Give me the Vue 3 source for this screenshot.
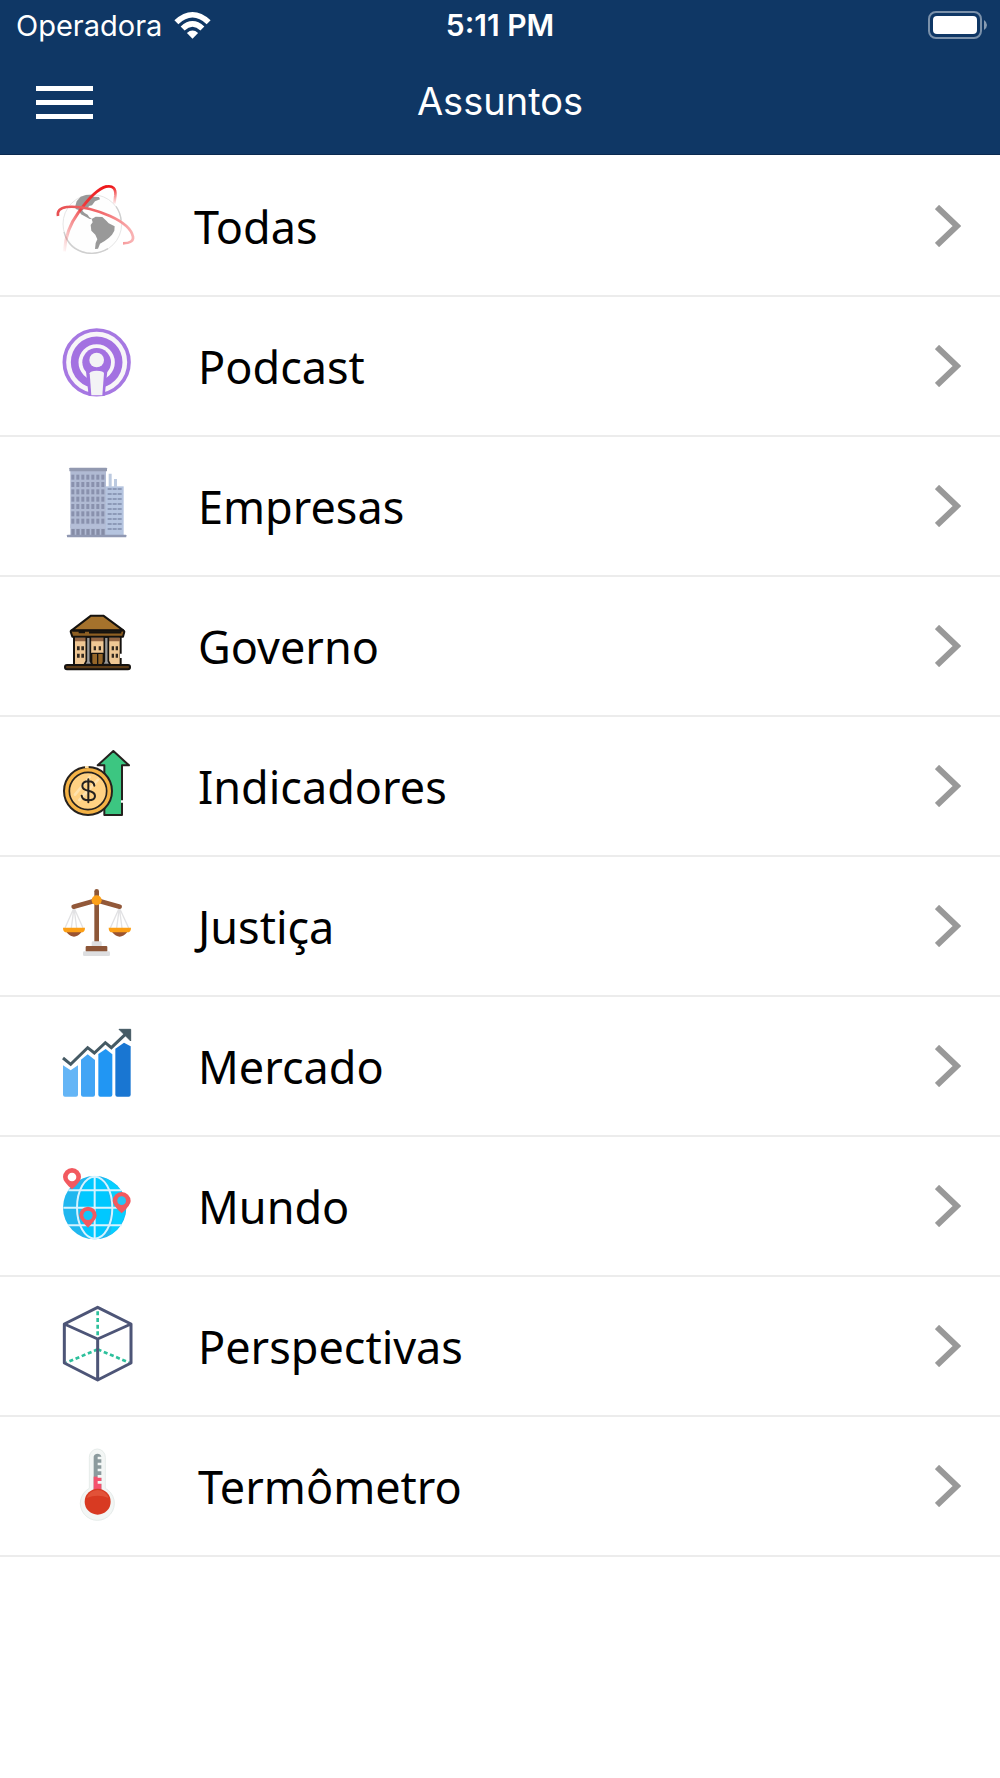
<script setup>
import { ref } from "vue";

const menuOpen = ref(false);

// box = viewBox of the icon, all icons share the same scale
const assuntos = [
    { id: "todas", nome: "Todas", box: "30 14 288 270" },
    { id: "podcast", nome: "Podcast", box: "0 0 300 270" },
    { id: "empresas", nome: "Empresas", box: "0 0 300 270" },
    { id: "governo", nome: "Governo", box: "0 -15 300 270" },
    { id: "indicadores", nome: "Indicadores", box: "0 -15 300 270" },
    { id: "justica", nome: "Justiça", box: "0 -15 300 270" },
    { id: "mercado", nome: "Mercado", box: "0 -15 300 270" },
    { id: "mundo", nome: "Mundo", box: "0 -15 300 270" },
    { id: "perspectivas", nome: "Perspectivas", box: "0 -15 300 270" },
    { id: "termometro", nome: "Termômetro", box: "0 -15 300 270" },
];
</script>


<template>
    <div class="app">
        <header class="topo">
            <div class="status">
                <div class="operadora">
                    <span>Operadora</span>
                    <svg class="wifi" viewBox="0 0 110 82" aria-hidden="true">
                        <path d="M0 25 Q55 -25 110 25 L98 37 Q55 -3 12 37 Z" fill="#fff" />
                        <path d="M19 44 Q55 11 91 44 L79 56 Q55 34 31 56 Z" fill="#fff" />
                        <path d="M38 64 Q55 49 72 64 L55 81 Z" fill="#fff" />
                    </svg>
                </div>
                <span class="hora">5:11 PM</span>
                <svg class="bateria" viewBox="0 0 60 28" aria-hidden="true">
                    <rect x="1" y="1" width="52" height="26" rx="7" fill="none" stroke="#fff" stroke-opacity=".45" stroke-width="2" />
                    <rect x="5" y="5" width="44" height="18" rx="4" fill="#fff" />
                    <path d="M56 9 Q59 11 59 14 T56 19 Z" fill="#fff" fill-opacity=".5" />
                </svg>
            </div>
            <div class="barra">
                <button class="menu" type="button" aria-label="Menu" :aria-expanded="menuOpen" @click="menuOpen = !menuOpen">
                    <span class="risco"></span>
                    <span class="risco"></span>
                    <span class="risco"></span>
                </button>
                <h1 class="titulo">Assuntos</h1>
            </div>
        </header>

        <ul class="lista">
            <li v-for="item of assuntos" :key="item.id">
                <a class="linha" :href="'#' + item.id">
                    <svg class="icone" :class="{ estreito: item.id === 'todas' }" :viewBox="item.box" aria-hidden="true">
                        <g v-if="item.id === 'todas'">
                            <defs>
                                <linearGradient id="orbitaA" x1="1" y1="0" x2="0" y2="1">
                                    <stop offset="0" stop-color="#ee1518" />
                                    <stop offset=".4" stop-color="#ee3a3c" />
                                    <stop offset="1" stop-color="#ee3a3c" stop-opacity=".05" />
                                </linearGradient>
                                <linearGradient id="orbitaB" x1="0" y1="0" x2="1" y2="0">
                                    <stop offset="0" stop-color="#e85052" />
                                    <stop offset=".6" stop-color="#f26c6e" />
                                    <stop offset="1" stop-color="#f9b3b4" />
                                </linearGradient>
                                <linearGradient id="orbitaC" x1="0" y1="0" x2="0" y2="1">
                                    <stop offset="0" stop-color="#ee1518" />
                                    <stop offset="1" stop-color="#ee3a3c" stop-opacity=".1" />
                                </linearGradient>
                            </defs>
                            <circle cx="157" cy="161" r="88" fill="#fefefe" stroke="#e6e6e6" stroke-width="3" />
                            <path d="M228 108 Q242 128 243 150 M72 185 Q86 238 140 248 Q174 253 204 235" fill="none" stroke="#cfcfcf" stroke-width="4" />
                            <path d="M106 107 L110 93 L122 79 L138 74 L157 73 L160 79 L177 80 L180 87 L165 93 L156 105 L147 107 L144 113 L134 113 L127 121 L134 128 L143 133 L148 141 L156 145 L149 146 L137 139 L123 132 L116 119 L107 116 Z" fill="#999" />
                            <path d="M155 146 L167 139 L187 140 L199 151 L206 159 L224 168 L223 181 L216 193 L207 202 L194 212 L180 220 L174 235 L165 236 L167 218 L172 207 L166 193 L154 181 L152 164 L158 156 Z" fill="#999" />
                            <path d="M73 243 Q77 178 115 127 Q164 57 200 48" fill="none" stroke="url(#orbitaA)" stroke-width="9" />
                            <path d="M198 49 Q229 43 226 76 L223 100" fill="none" stroke="url(#orbitaC)" stroke-width="8" />
                            <path d="M54 137 Q50 114 80 110 Q136 105 210 137 Q272 165 279 199 Q282 218 249 219" fill="none" stroke="url(#orbitaB)" stroke-width="8" />
                        </g>

                        <g v-else-if="item.id === 'podcast'">
                            <circle cx="140" cy="142" r="97" fill="#f7f5f8" stroke="#a678e2" stroke-width="11" />
                            <circle cx="140" cy="142" r="66" fill="none" stroke="#a371e1" stroke-width="23" />
                            <circle cx="140" cy="142" r="43" fill="#a371e1" />
                            <path d="M107 160 H173 L164 242 H116 Z" fill="#a371e1" />
                            <circle cx="140" cy="135" r="22" fill="#f3f3f5" />
                            <path d="M119 175 Q121 167 140 167 Q161 167 162 175 L157 241 H124 Z" fill="#f3f3f5" />
                        </g>

                        <g v-else-if="item.id === 'empresas'">
                            <rect x="61" y="44" width="107" height="197" fill="#b0bad3" />
                            <rect x="58" y="38" width="113" height="11" rx="2" fill="#9299b0" />
                            <rect x="167" y="94" width="54" height="147" fill="#b5c4df" />
                            <path d="M176 56 h9 v40 h-9 Z M192 72 h9 v25 h-9 Z" fill="#bccae0" />
                            <template v-for="r in 7" :key="r">
                                <rect v-for="c in 7" :key="c" :x="49 + c * 15" :y="37 + r * 22" width="9" height="15" fill="#8991ad" />
                            </template>
                            <rect v-for="c in 7" :key="'p' + c" :x="49 + c * 15" y="222" width="10" height="18" fill="#858ca6" />
                            <template v-for="r in 9" :key="'l' + r">
                                <rect v-for="c in 3" :key="c" :x="158 + c * 15" :y="84 + r * 15" width="12" height="6" fill="#8d9ab8" />
                            </template>
                            <rect x="61" y="208" width="107" height="11" fill="#b4bed7" />
                            <rect x="51" y="239" width="178" height="8" rx="2" fill="#9098b2" />
                        </g>

                        <g v-else-if="item.id === 'governo'" stroke="#15120f" stroke-width="6" stroke-linejoin="round">
                            <rect x="72" y="108" width="140" height="87" fill="#efc794" />
                            <path d="M75 113 H210 V124 H75 Z" fill="#946644" stroke="none" />
                            <path d="M81 139 h8 v12 h-8 Z M94 139 h8 v12 h-8 Z M81 161 h8 v12 h-8 Z M94 161 h8 v12 h-8 Z M131 139 h7 v12 h-7 Z M146 139 h7 v12 h-7 Z M185 139 h7 v12 h-7 Z M197 139 h7 v12 h-7 Z M185 161 h7 v12 h-7 Z M197 161 h7 v12 h-7 Z" fill="#33291f" stroke="none" />
                            <path d="M125 160 H160 V195 H125 Z M143 160 V195" fill="#956629" stroke-width="4" />
                            <path d="M109 111 H121 V183 L127 194 H103 L109 183 Z M163 111 H175 V183 L181 194 H157 L163 183 Z" fill="#999" stroke-width="5" />
                            <path d="M65 91 L123 47 H160 L220 91 Z" fill="#a5722c" />
                            <path d="M62 95 Q62 90 68 92 H216 Q222 90 223 95 L219 110 H67 Z" fill="#8e5f23" />
                            <path d="M86 96 H105 M117 97 H214" stroke-width="7" />
                            <rect x="45" y="195" width="195" height="13" rx="6" fill="#5e3d18" />
                            <path d="M213 161 V174" stroke="#fff" />
                        </g>

                        <g v-else-if="item.id === 'indicadores'" stroke="#25211e" stroke-width="6" stroke-linejoin="round" stroke-linecap="round">
                            <path d="M190 33 L237 76 H216 V225 H163 V76 H143 Z" fill="#3cc681" />
                            <path d="M216 181 V188" stroke="#fff" stroke-linecap="butt" />
                            <circle cx="114" cy="153" r="72" fill="#f4b245" />
                            <circle cx="114" cy="153" r="56" fill="#ffd183" stroke-width="5" />
                            <path d="M75 164 L119 111 M88 180 L144 119" stroke="#ffe2ac" stroke-width="8" />
                            <path d="M133 137 Q132 124 115 124 Q97 124 97 138 Q97 149 115 152 Q135 156 135 168 Q135 181 115 181 Q97 181 95 167 M115 118 V187" fill="none" stroke-width="6" />
                            <path d="M105 81 H116" stroke="#ffe1a8" stroke-linecap="butt" />
                        </g>

                        <g v-else-if="item.id === 'justica'">
                            <path d="M72 83 L45 144 M72 83 L64 144 M72 83 L80 144 M72 83 L99 144 M208 83 L181 144 M208 83 L200 144 M208 83 L216 144 M208 83 L236 144" stroke="#e2e2e4" stroke-width="4" />
                            <path d="M140 34 V190" stroke="#8d5738" stroke-width="14" stroke-linecap="round" />
                            <path d="M71 80 L140 61 L209 80" fill="none" stroke="#925839" stroke-width="14" stroke-linecap="round" stroke-linejoin="round" />
                            <circle cx="140" cy="61" r="15" fill="#fca018" />
                            <path d="M49 156 H95 Q72 184 49 156 Z M186 156 H232 Q209 184 186 156 Z" fill="#995332" />
                            <path d="M39 143 H105 Q105 157 94 157 H50 Q39 157 39 143 Z M176 143 H243 Q243 157 232 157 H187 Q176 157 176 143 Z" fill="#fc9f16" />
                            <rect x="125" y="184" width="30" height="17" rx="4" fill="#dedfe1" />
                            <rect x="107" y="198" width="65" height="18" rx="3" fill="#8c5537" />
                            <rect x="99" y="214" width="81" height="14" rx="4" fill="#dddee0" />
                        </g>

                        <g v-else-if="item.id === 'mercado'">
                            <path d="M39 136 L62 151 L84 136 V224 Q84 230 78 230 H45 Q39 230 39 224 Z" fill="#64b5f6" />
                            <path d="M93 119 L113 103 L135 120 V224 Q135 230 129 230 H99 Q93 230 93 224 Z" fill="#42a5f5" />
                            <path d="M145 102 L167 87 L187 103 V224 Q187 230 181 230 H151 Q145 230 145 224 Z" fill="#2196f3" />
                            <path d="M196 86 L222 68 L242 79 V224 Q242 230 236 230 H202 Q196 230 196 224 Z" fill="#1976d2" />
                            <path d="M39 114 L62 133 L113 83 L133 99 L166 68 L184 83 L226 43" fill="none" stroke="#455a64" stroke-width="9" />
                            <path d="M207 28 H242 V63 Z" fill="#455a64" stroke="#455a64" stroke-width="3" stroke-linejoin="round" />
                        </g>

                        <g v-else-if="item.id === 'mundo'">
                            <circle cx="134" cy="143" r="95" fill="#20b7ef" />
                            <path d="M134 50 A52 94 0 0 1 134 237 A52 94 0 0 1 134 50" fill="#00c8ff" />
                            <path d="M150 50 A95 95 0 0 1 180 225 Q202 145 165 55 Z" fill="#07cfff" />
                            <g fill="none" stroke="#d7f3ff" stroke-width="6">
                                <path d="M134 49 V237 M40 143 H229 M55 91 H213 M54 196 H215" />
                                <ellipse cx="134" cy="143" rx="53" ry="93" />
                            </g>
                            <g fill="#f2595f">
                                <path d="M66 88 Q39 65 39 51 A27 27 0 0 1 93 51 Q93 65 66 88 Z" />
                                <path d="M215 160 Q188 136 188 123 A27 27 0 0 1 242 123 Q242 136 215 160 Z" />
                                <path d="M114 203 Q88 178 88 166 A26 26 0 0 1 140 166 Q140 178 114 203 Z" />
                            </g>
                            <circle cx="66" cy="51" r="13" fill="#fff" />
                            <circle cx="215" cy="122" r="13" fill="#28c4f4" />
                            <circle cx="114" cy="166" r="14" fill="#12c6fa" />
                        </g>

                        <g v-else-if="item.id === 'perspectivas'" fill="none">
                            <path d="M143 34 V115 M143 148 L49 188 M143 148 L238 188" stroke="#2dc09c" stroke-width="8" stroke-dasharray="12 8" />
                            <path d="M143 22 L243 72 V189 L143 240 L43 189 V72 Z M43 72 L143 117 L243 72 M143 117 V240" stroke="#4d5577" stroke-width="9" stroke-linejoin="round" />
                        </g>

                        <g v-else>
                            <path d="M118 52 A24 25 0 0 1 166 52 V145 A51 51 0 1 1 118 145 Z" fill="#f3f6f5" stroke="#e6ecea" stroke-width="3" />
                            <path d="M131 50 A12 12 0 0 1 154 50 V150 H131 Z" fill="#8b9a9d" />
                            <path d="M131 110 H154 V150 H131 Z" fill="#f4526e" />
                            <path d="M143 54 H156 M143 72 H156 M143 90 H156 M143 109 H156 M143 127 H156" stroke="#f2f6f5" stroke-width="8" />
                            <circle cx="143" cy="185" r="39" fill="#d83a22" />
                            <path d="M110 174 Q118 152 142 150 Q168 151 176 174 Q143 160 110 174 Z" fill="#e25238" />
                        </g>
                    </svg>
                    <span class="nome">{{ item.nome }}</span>
                    <svg class="seta" viewBox="0 0 26 42" aria-hidden="true">
                        <path d="M2 2 L22 21 L2 40" fill="none" stroke="#999" stroke-width="6" />
                    </svg>
                </a>
            </li>
        </ul>
    </div>
</template>


<style>
body {
    background-color: #fff;
}
</style>

<style scoped>
.app {
    min-height: 100vh;
    background-color: #fff;
    font-family: "Noto Sans", sans-serif;
}
.topo {
    background-color: #0f3765;
    color: #fff;
    font-family: Inter, sans-serif;
    border-bottom: 1px solid #0a2950;
}
.status {
    display: grid;
    grid-template-columns: 1fr auto 1fr;
    align-items: center;
    height: 50px;
    padding: 0 12px;
    font-size: 29px;
}
.operadora {
    display: flex;
    align-items: center;
    gap: 12px;
    padding-left: 4px;
}
.wifi {
    width: 37px;
    height: 27px;
}
.hora {
    font-size: 30px;
    font-weight: 600;
}
.bateria {
    width: 60px;
    height: 28px;
    justify-self: end;
}
.barra {
    display: grid;
    grid-template-columns: 1fr auto 1fr;
    align-items: center;
    height: 104px;
    padding: 0 36px;
}
.menu {
    display: flex;
    flex-direction: column;
    gap: 9px;
    width: 57px;
    padding: 0;
    border: 0;
    background: none;
    cursor: pointer;
}
.risco {
    width: 100%;
    height: 5px;
    background-color: #fff;
}
.titulo {
    margin: 0;
    padding-bottom: 2px;
    font-size: 38px;
    font-weight: 400;
}
.lista {
    margin: 0;
    padding: 2px 0 0;
    list-style: none;
}
.linha {
    display: flex;
    align-items: center;
    box-sizing: border-box;
    height: 140px;
    padding: 0 39px 0 50px;
    border-bottom: 2px solid #ececec;
    color: #000;
    text-decoration: none;
}
.icone {
    flex: none;
    width: 100px;
    height: 90px;
    margin-bottom: 12px;
}
.estreito {
    width: 96px;
}
.nome {
    flex: 1;
    margin-left: 48px;
    font-size: 45px;
}
.seta {
    flex: none;
    width: 26px;
    height: 42px;
}
</style>
